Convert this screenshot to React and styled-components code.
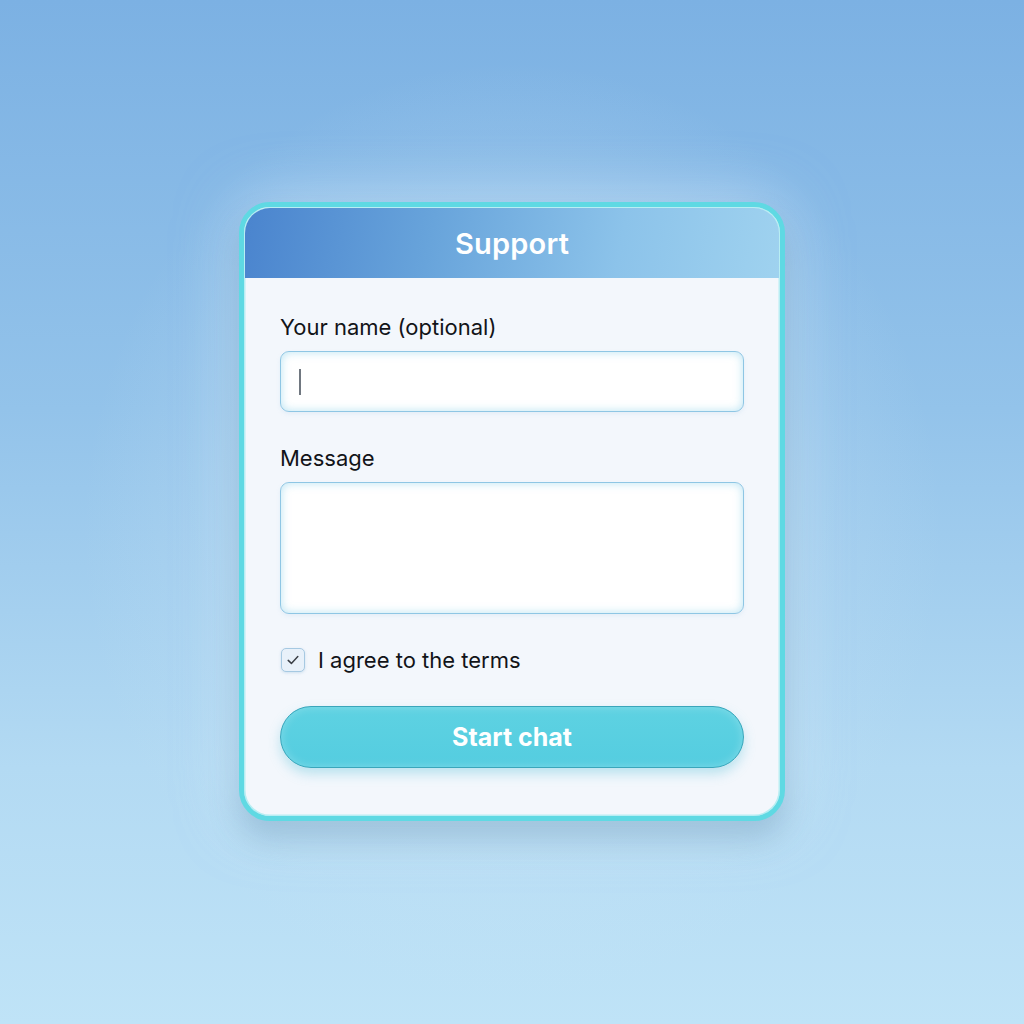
import React from "react";
import styled, { createGlobalStyle } from "styled-components";

const Global = createGlobalStyle`
  html, body { margin: 0; padding: 0; }
  body { font-family: Inter, "Noto Sans", sans-serif; }
`;

const Page = styled.div`
  width: 1024px;
  height: 1024px;
  box-sizing: border-box;
  padding-top: 202px;
  display: flex;
  justify-content: center;
  align-items: flex-start;
  background:
    radial-gradient(ellipse 430px 470px at 50% 52%, rgba(215,236,250,0.65) 0%, rgba(200,228,246,0.3) 55%, rgba(200,228,246,0) 100%),
    linear-gradient(180deg, #7cb1e3 0%, #93c3ea 40%, #b3daf3 75%, #bfe3f7 100%);
`;

const Card = styled.div`
  width: 546px;
  height: 619px;
  box-sizing: border-box;
  border: 5px solid #5fd9e3;
  border-radius: 31px;
  background: #f3f7fc;
  overflow: hidden;
  display: flex;
  flex-direction: column;
  box-shadow:
    inset 0 0 0 1.5px #b8eef3,
    0 18px 30px rgba(60, 110, 150, 0.28),
    0 0 60px rgba(230, 245, 255, 0.5);
`;

const Header = styled.div`
  height: 70px;
  margin: 1px 1px 0;
  border-radius: 25px 25px 0 0;
  background: linear-gradient(100deg, #4a84ce 0%, #68a4db 35%, #8cc3ea 70%, #9fd2ef 100%);
  display: flex;
  align-items: center;
  justify-content: center;
  color: #ffffff;
  font-size: 29px;
  font-weight: 600;
  letter-spacing: 0.2px;
  flex-shrink: 0;
`;

const Body = styled.div`
  padding: 36px 36px 0 36px;
  display: flex;
  flex-direction: column;
`;

const Label = styled.label`
  font-size: 22px;
  line-height: 26px;
  color: #121418;
  margin-bottom: 11px;
  margin-top: ${(p) => p.$top || 0}px;
`;

const Field = styled.div`
  height: ${(p) => p.$h}px;
  box-sizing: border-box;
  border: 1.5px solid #8ec6e4;
  border-radius: 9px;
  background: #ffffff;
  box-shadow: inset 0 0 10px rgba(140, 210, 235, 0.6), 0 2px 4px rgba(140, 190, 220, 0.15);
  display: flex;
  align-items: ${(p) => (p.$top ? "flex-start" : "center")};
  padding-left: 18px;
`;

const Caret = styled.div`
  width: 1.5px;
  height: 26px;
  background: #707780;
`;

const CheckRow = styled.div`
  margin-top: 33px;
  display: flex;
  align-items: center;
  gap: 13px;
  font-size: 22px;
  line-height: 26px;
  color: #121418;
`;

const Box = styled.div`
  width: 24px;
  height: 24px;
  box-sizing: border-box;
  border: 1.5px solid #a6c9e2;
  border-radius: 5px;
  background: #e8f1fa;
  display: flex;
  align-items: center;
  justify-content: center;
  margin-left: 1px;
  box-shadow: 0 1px 3px rgba(120, 170, 210, 0.3);
`;

const Button = styled.button`
  margin-top: 33px;
  height: 62px;
  border: 1.5px solid #3aa6bb;
  border-radius: 31px;
  background: linear-gradient(180deg, #5ed2e2 0%, #54cde0 100%);
  color: #ffffff;
  font-family: Inter, "Noto Sans", sans-serif;
  font-size: 25px;
  font-weight: 700;
  box-shadow: inset 0 0 10px rgba(255, 255, 255, 0.25), 0 6px 12px rgba(80, 190, 215, 0.35);
  cursor: pointer;
`;

export default function App() {
  return (
    <>
      <Global />
      <Page>
        <Card>
          <Header>Support</Header>
          <Body>
            <Label>Your name (optional)</Label>
            <Field $h={61}>
              <Caret />
            </Field>
            <Label $top={33}>Message</Label>
            <Field $h={132} $top />
            <CheckRow>
              <Box>
                <svg width="16" height="16" viewBox="0 0 16 16" fill="none">
                  <path d="M3.2 8.4 L6.4 11.4 L12.8 4.6" stroke="#3a3f46" strokeWidth="1.5" strokeLinecap="round" strokeLinejoin="round" />
                </svg>
              </Box>
              <span>I agree to the terms</span>
            </CheckRow>
            <Button>Start chat</Button>
          </Body>
        </Card>
      </Page>
    </>
  );
}
